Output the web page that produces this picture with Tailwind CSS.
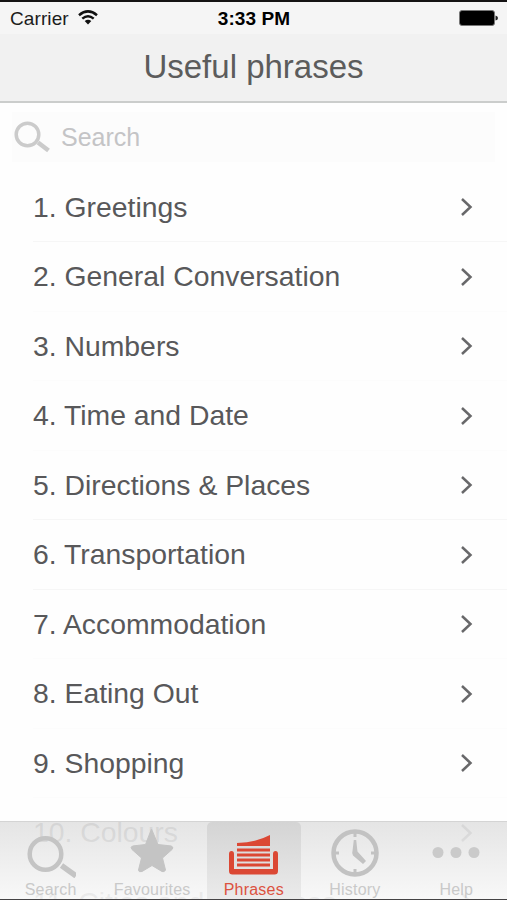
<!DOCTYPE html>
<html lang="en">
<head>
<meta charset="utf-8">
<title>Useful phrases</title>
<script src="https://cdn.jsdelivr.net/npm/@tailwindcss/browser@4"></script>
</head>
<body class="bg-white overflow-hidden font-['Liberation_Sans',Arial,sans-serif]">
<div class="relative w-[507px] h-[900px] overflow-hidden flex flex-col bg-[#fefefe] border-t-2 border-[#151314]">
  <header class="shrink-0 h-[101px] bg-[#f1f1f1] border-b-2 border-[#cbcdcc]">
    <div class="h-[32px] bg-[#f5f5f5] grid grid-cols-3 items-center pl-[10px] pr-[9px] text-[19px] leading-none text-black">
      <div class="flex items-center gap-[9px]">
        <span class="text-[#1c1c1c] tracking-[0.1px]">Carrier</span>
        <svg class="w-[20px] h-[15px] -mt-[2px]" viewBox="0 0 20 15" fill="none" stroke="#111" stroke-width="2.5"><path d="M1 5.2Q10-2.4 19 5.2M4.3 8.6Q10 3.8 15.7 8.6"/><path d="M6.7 11Q10 8.3 13.3 11L10 14.5Z" fill="#111" stroke="none"/></svg>
      </div>
      <span class="text-center font-bold text-[19px] tracking-[0.1px] whitespace-nowrap">3:33 PM</span>
      <svg class="justify-self-end w-[39px] h-[16px]" viewBox="0 0 39 16"><rect x=".5" y=".5" width="35" height="15" rx="2.5" fill="#000" stroke="#777"/><path d="M36.5 5.5Q39 6 39 8T36.5 10.5Z" fill="#222"/></svg>
    </div>
    <h1 class="h-[65px] flex items-center justify-center text-[33px] text-[#5c5c5c]">Useful phrases</h1>
  </header>
  <div class="shrink-0 mx-[12px] mt-[9px] h-[50px] bg-[#fcfcfc] flex items-center pl-[2px] gap-[11px] text-[#c4c4c6] text-[25px]">
    <svg class="w-[36px] h-[32px]" viewBox="0 0 36 32" fill="none" stroke="#cbcbcb"><circle cx="13.5" cy="13.5" r="11.3" stroke-width="3.5"/><path d="M24 21.5L34.5 29.5" stroke-width="4.5"/></svg>
    <span class="pt-px">Search</span>
  </div>
  <ul id="list" class="shrink-0 mt-[10.5px] text-[28.35px] text-[#58585a]"></ul>
  <nav class="absolute left-0 top-[819px] w-[507px] h-[79px] grid grid-cols-5 border-t border-[#d4d4d4] bg-linear-to-b from-[#e2e2e2]/90 to-[#f8f8f8]/92 text-[16px] tracking-[0.2px] leading-none text-[#c9c9c9]">
    <div class="flex flex-col items-center pt-[12px]">
      <svg class="w-[50px] h-[44px]" viewBox="0 0 50 44" fill="none" stroke="#c4c4c4"><circle cx="19.5" cy="20" r="15.8" stroke-width="4.5"/><path d="M35.5 31.5L50 42" stroke-width="5.5"/></svg>
      <span class="mt-[4px]">Search</span>
    </div>
    <div class="flex flex-col items-center pt-[7px]">
      <svg class="w-[46px] h-[49px]" viewBox="0 0 46 49"><path d="M22.5 0L29 15.5L42.5 17Q45 19 43 20.5L33.5 29L36.5 41Q35.5 43.5 33 42.5L23 36.5L13 42.5Q9.5 43.5 9.5 41L12.5 29L3 20.5Q1 18 3.5 17L16.5 15.5Z" fill="#c4c4c4" stroke="#c4c4c4" stroke-linejoin="round"/></svg>
      <span class="mt-[4px]">Favourites</span>
    </div>
    <div class="w-[94px] ml-[4px] rounded-t-[5px] bg-linear-to-b from-[#d4d4d4] to-[#ebebeb] flex flex-col items-center pt-[11px]">
      <svg class="w-[49px] h-[43px]" viewBox="0 0 49 43" fill="#db4834"><path d="M0 21Q0 18 2.5 18Q5 18 5 21V36H44V21Q44 18 46.5 18Q49 18 49 21V38Q49 41.5 45.5 41.5H3.5Q0 41.5 0 38Z"/><path d="M8 10Q27 9.5 41 2V13H8ZM8 15.5H41V18.5H8ZM8 20.5H41V23.5H8ZM8 25.5H41V28.5H8ZM8 30.5H41V33.5H8Z"/></svg>
      <span class="mt-[6px] text-[#dc523f]">Phrases</span>
    </div>
    <div class="flex flex-col items-center pt-[7px]">
      <svg class="w-[48px] h-[48px]" viewBox="0 0 48 48" fill="none" stroke="#c2c2c2"><circle cx="24" cy="24" r="21.5" stroke-width="4.5"/><path d="M24 4V8M24 40V44M4 24H8M40 24H44" stroke-width="3"/><path d="M22.8 11H25.2L26.5 22.5L35 32L32 35L22 26.5Q20.5 24.5 21.5 22Z" fill="#c2c2c2" stroke="none"/></svg>
      <span class="mt-[5px]">History</span>
    </div>
    <div class="flex flex-col items-center pt-[7px]">
      <svg class="w-[48px] h-[48px]" viewBox="0 0 48 48" fill="#cacaca"><circle cx="6" cy="23.5" r="5.5"/><circle cx="24" cy="23.5" r="5.5"/><circle cx="42" cy="23.5" r="5.5"/></svg>
      <span class="mt-[5px]">Help</span>
    </div>
  </nav>
  <div class="absolute left-0 top-[897px] w-full h-px bg-[#454345]"></div>
</div>
<script>
const phrases = ["Greetings","General Conversation","Numbers","Time and Date","Directions & Places","Transportation","Accommodation","Eating Out","Shopping","Colours","Cities and Provinces"];
const ruled = [0,4,5];
const list = document.getElementById("list");
phrases.forEach((name, i) => {
  const row = document.createElement("li");
  row.className = "ml-[33px] h-[69.5px] flex items-center justify-between pr-[34px] pt-px border-b " + (ruled.includes(i) ? "border-[#f6f6f6]" : "border-[#fcfcfc]");
  const label = document.createElement("span");
  label.textContent = (i + 1) + ". " + name;
  row.append(label);
  row.insertAdjacentHTML("beforeend", '<svg class="w-[13px] h-[20px]" viewBox="0 0 13 20" fill="none" stroke="#68686a" stroke-width="2.5"><path d="M2 2L10.5 10L2 18"/></svg>');
  list.append(row);
});
</script>
</body>
</html>
